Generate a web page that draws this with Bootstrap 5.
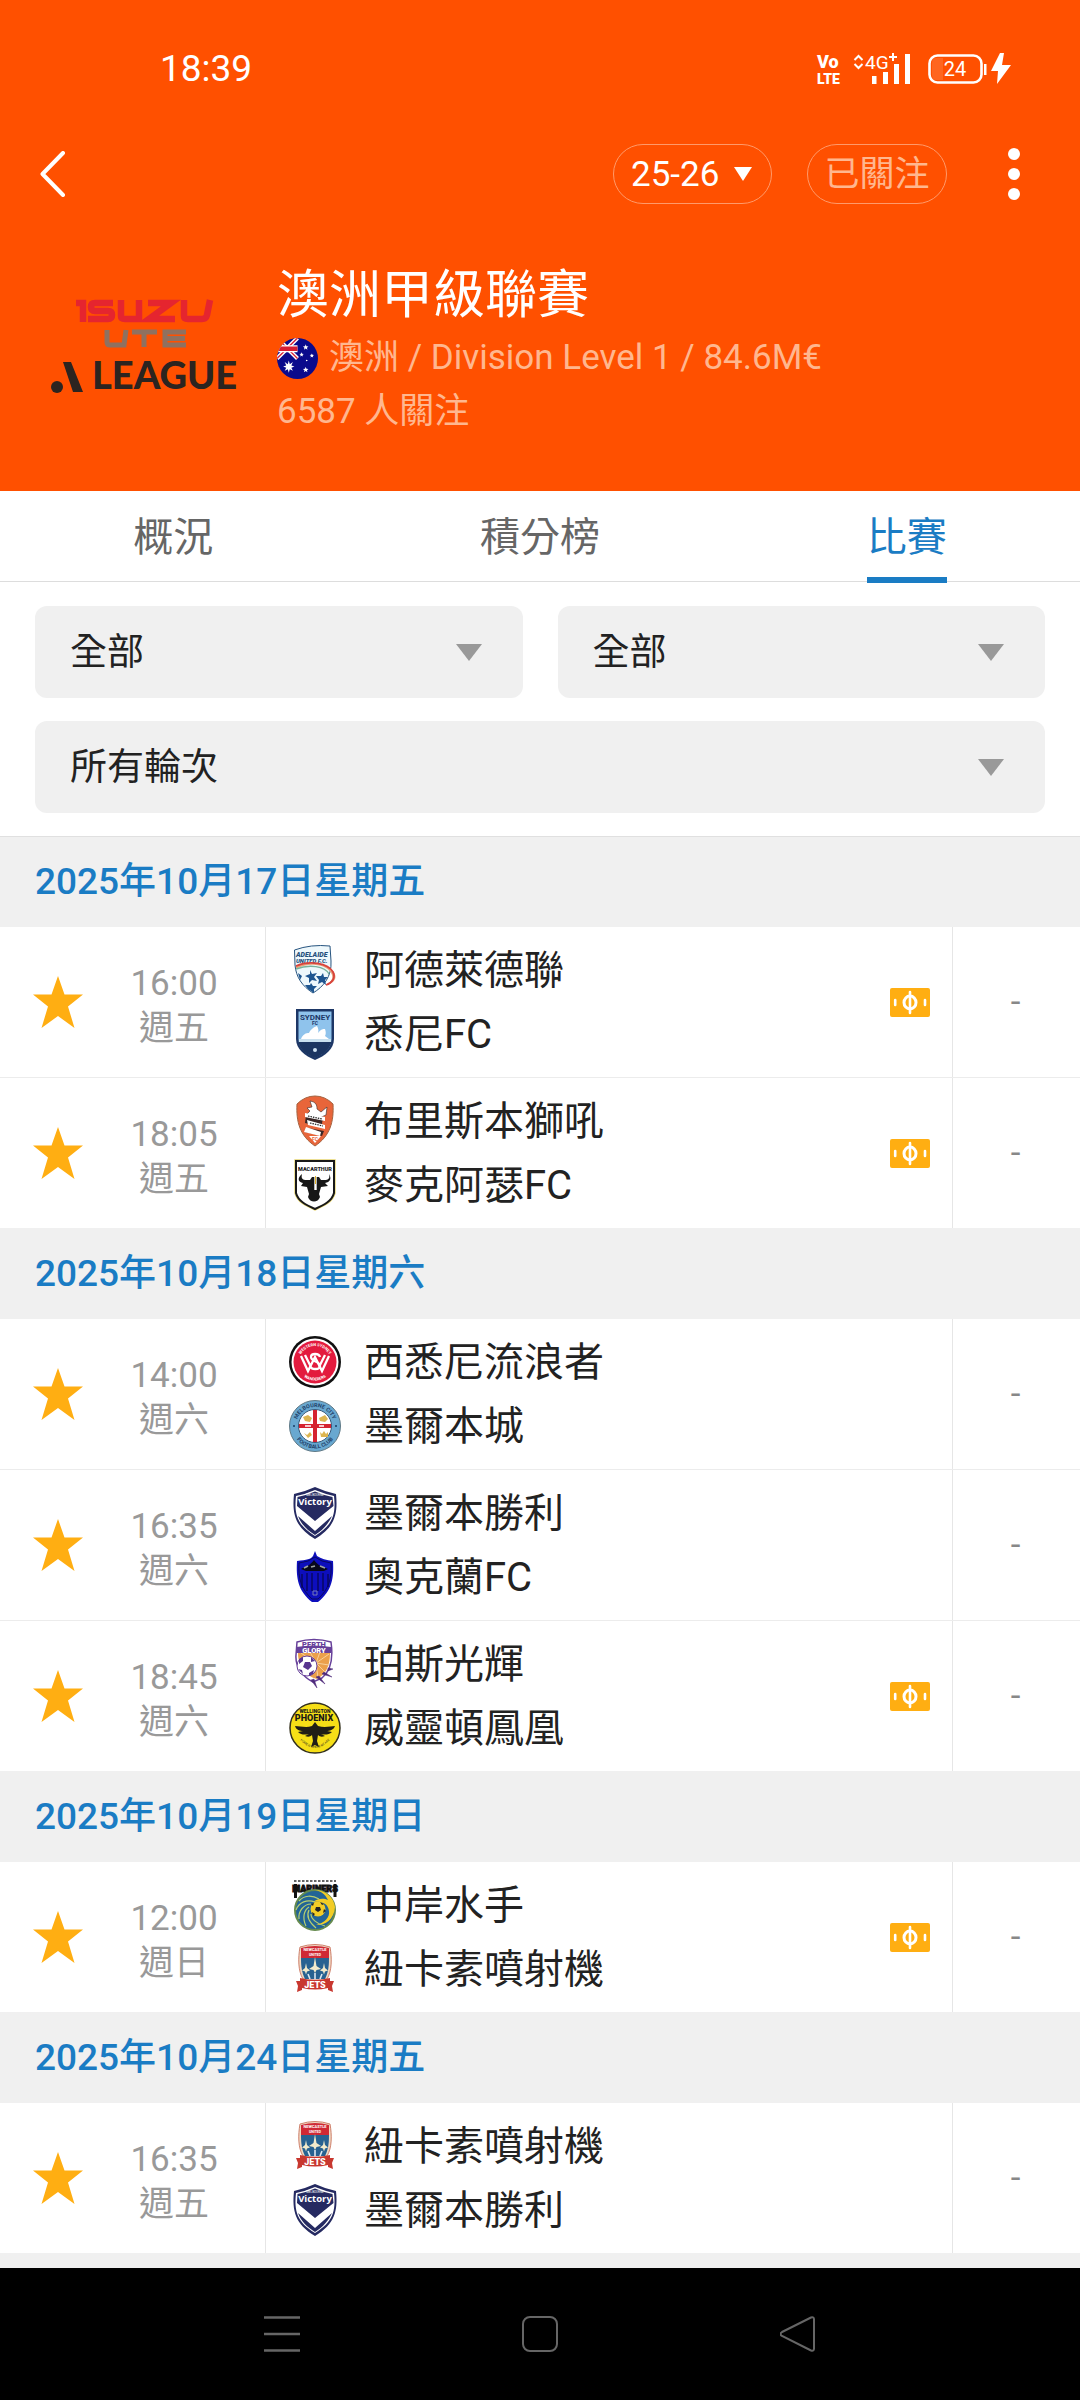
<!DOCTYPE html>
<html lang="zh-Hant">
<head>
<meta charset="utf-8">
<meta name="viewport" content="width=device-width, initial-scale=1">
<title>澳洲甲級聯賽</title>
<link href="https://cdn.jsdelivr.net/npm/bootstrap@5.3.0/dist/css/bootstrap.min.css" rel="stylesheet">
<style>
  :root { --brand: #ff5000; --accent: #1a7cc4; --panel: #f0f0f0; --rule: #e6e6e6; }
  body { font-family: Roboto, "Noto Sans CJK TC", sans-serif; font-size: 35px; line-height: 44px; color: #222; background: #fff; }
  svg { display: block; flex: none; }
  .hero { background: var(--brand); color: #fff; padding-bottom: 52px; }
  .status-bar { height: 138px; padding: 0 66px 0 160px; font-size: 37px; }
  .app-bar { height: 72px; padding: 0 51px 0 32px; }
  .pill { height: 60px; border: 1px solid #ff9a6a; border-radius: 30px; background-color: transparent; font-size: 35px; line-height: 44px; padding: 2px 0 0; }
  .season { width: 159px; color: #fff; appearance: none; padding-left: 17px;
    background: url("data:image/svg+xml,%3Csvg xmlns='http://www.w3.org/2000/svg' viewBox='0 0 18 14'%3E%3Cpath fill='%23fff' d='M0 0h18L9 14z'/%3E%3C/svg%3E") no-repeat right 19px center / 18px 14px; }
  .follow { width: 140px; color: #ffb78f; margin-left: 35px; }
  .icon-btn { border: 0; background: none; padding: 8px; }
  .more { margin-left: 52px; }
  .league { padding: 56px 36px 0 41px; gap: 36px; }
  .league-name { font-size: 52px; line-height: 60px; font-weight: 400; margin: 0 0 5px; }
  .league-info { line-height: 54px; color: #ffb78f; gap: 11px; }
  .tabs { height: 91px; border-bottom: 1px solid #ddd; font-size: 40px; }
  .tabs .nav-link { color: #666; line-height: 50px; padding: 22px 0 0; height: 92px; }
  .tabs .nav-link span { display: inline-block; height: 70px; line-height: 50px; }
  .tabs .nav-link.active { color: var(--accent); }
  .tabs .nav-link.active span { border-bottom: 6px solid var(--accent); }
  .filters { padding: 24px 35px 23px; gap: 23px 35px; display: grid; grid-template-columns: 1fr 1fr; border-bottom: 1px solid #e0e0e0; }
  .filters .form-select { height: 92px; border: 0; border-radius: 12px; color: #222; font-size: 37px; line-height: 48px; padding: 2px 80px 0 35px;
    background: var(--panel) url("data:image/svg+xml,%3Csvg xmlns='http://www.w3.org/2000/svg' viewBox='0 0 26 17'%3E%3Cpath fill='%23999' d='M0 0h26L13 17z'/%3E%3C/svg%3E") no-repeat right 41px center / 26px 17px; }
  .wide { grid-column: 1 / -1; }
  .day { background: var(--panel); color: var(--accent); font-size: 37px; line-height: 90px; font-weight: 500; margin: 0; padding: 0 35px; }
  .fixture { border-bottom: 1px solid #ececec; height: 151px; }
  .fixture-last { border-bottom-color: var(--panel); }
  .fav { width: 115px; padding: 0 0 0 33px; border: 0; background: none; flex: none; }
  .kickoff { width: 118px; flex: none; color: #999; text-align: center; line-height: 45px; padding-top: 7px; }
  .kickoff-box { width: 266px; border-right: 1px solid var(--rule); flex: none; }
  .teams { padding: 17px 0 17px 23px; gap: 12px; }
  .club { height: 52px; gap: 23px; font-size: 40px; line-height: 54px; }
  .ticket { padding-right: 22px; }
  .score { width: 128px; flex: none; border-left: 1px solid var(--rule); color: #888; padding-right: 2px; }
  .list-end { background: var(--panel); height: 14px; }
  .sys-nav { background: #000; height: 132px; padding: 0 264px; }
</style>
</head>
<body>
<svg width="0" height="0" class="position-absolute" aria-hidden="true">
  <defs>
    <symbol id="star" viewBox="0 0 50 52"><path fill="#ffae12" d="M25 0l6.500 18.500H50L35 30.500 41.500 52 25 40 8.500 52 15 30.500 0 18.500h18.500z"/></symbol>
    <symbol id="note" viewBox="0 0 40 29"><rect width="40" height="29" rx="2" fill="#ffae12"/><g fill="none" stroke="#fff" stroke-width="3"><ellipse cx="20" cy="14.500" rx="6" ry="6.500"/><path d="M20 4v21M5.200 12v5M35 12v5" stroke-linecap="round" stroke-width="2.600"/></g></symbol>

    <symbol id="adelaide" viewBox="0 0 52 52">
      <path d="M5.500 6Q22 0 41 2l1 15c1 16-8 26-18 32C13 42 7 33 6 21z" fill="#eef8fc" stroke="#27547f"/>
      <g font-family="Roboto, sans-serif" font-weight="900" font-style="italic" fill="#24507c"><text x="7" y="13" font-size="7">ADELAIDE</text><text x="7" y="19" font-size="6">UNITED F.C.</text></g>
      <path d="M7 25c14-8 33-4 36 6 1 5-2 8-7 10 13-2 13-11 5-17C31 18 15 18 7 22z" fill="#e9a27a"/>
      <path d="M7 22c13-6 32-3 37 6 3 6-1 11-7 13" fill="none" stroke="#d8433c" stroke-width="1.800"/>
      <path d="M7 25c13-5 29-3 33 5" fill="none" stroke="#78b39b" stroke-width="1.500"/>
      <path fill="#1e5590" d="M21 26l2 4 5-1-3 4 3 4-5-1-3 3v-5l-4-2 5-2zM34 29l1 4 4 0-3 3 1 5-4-3-4 2 1-4-3-4h5zM22 39l2 3h4l-3 3 0 4-6-4-3-4h5zM9 29l4 3-2 4z"/>
    </symbol>
    <symbol id="sydney" viewBox="0 0 52 52">
      <path d="M7 1h38v30c0 10-9 17-19 21C16 48 7 41 7 31z" fill="#1d3766"/>
      <path d="M9.500 3.500h33V31c0 9-8 15-16.500 18.500C17 46 9.500 40 9.500 31z" fill="#8fc3ec"/>
      <path d="M9.500 34h33c-2 8-9 13-16.500 16C18 47 11 42 9.500 34z" fill="#1b3561"/>
      <path d="M12 31c2-5 5-6 8-6 1-3 5-6 8-7 1 2 2 4 1 7 3-4 5-4 7-4 1 3 1 5 0 7l4 3z" fill="#fff"/>
      <path d="M10 31h32v3H10z" fill="#c8e0ef"/><circle cx="26" cy="42" r="2" fill="#cfe2f2"/>
      <g font-family="Roboto, sans-serif" font-weight="700" fill="#1d3766" text-anchor="middle"><text x="26" y="11.500" font-size="8">SYDNEY</text><text x="26" y="17" font-size="5">FC</text></g>
    </symbol>
    <symbol id="roar" viewBox="0 0 52 52">
      <path d="M8 9Q16 1 26 1t18 8c1 18-3 32-18 42C11 41 7 27 8 9z" fill="#e8653a" stroke="#a46340"/>
      <path d="M21 6c6 1 7 4 7 8l4 3 6-5-1 8-7 3 3 6-12-2-4-7 4-4-3-3 5-1z" fill="#fff" stroke="#392a2a" stroke-width=".6"/>
      <path d="M17 20l17 4-2 8-16-4zM19 33l16 3-2 5-17-4z" fill="#3b2726"/>
      <path d="M16 18l20 4v4l-20-4zM18 25l18 5v4l-17-4zM17 32l15 5-1 4-16-4z" fill="#fff"/>
      <path d="M19 21l14 3M21 28l13 3" stroke="#222" stroke-width="1.200" stroke-dasharray="1.500 1"/>
      <path d="M20 41h12l-6 7z" fill="#fff"/><text x="26" y="45.500" font-size="5" text-anchor="middle" font-weight="700" fill="#e8653a">FC</text>
    </symbol>
    <symbol id="macarthur" viewBox="0 0 52 52">
      <path d="M7 2h38v32c-2 8-10 12-19 16C17 46 9 42 7 34z" fill="#fff" stroke="#e6d571" stroke-width="3.400"/>
      <path d="M7 2h38v32c-2 8-10 12-19 16C17 46 9 42 7 34z" fill="#fff" stroke="#181818" stroke-width="2"/>
      <text x="26" y="11.500" font-size="5.500" font-family="Roboto, sans-serif" font-weight="900" text-anchor="middle" fill="#222">MACARTHUR</text>
      <path d="M13 15c-1 4 0 6 5 6h3l2-3h7l2 3h3c5 0 6-2 5-6 3 5 1 8-4 9l3 3-7 1-2 7 1 3c-2 6-10 6-12 0l1-3-2-7-6-1 2-3c-5-1-6-5-1-9z" fill="#171717"/>
      <path d="M26.500 17v14" stroke="#fff" stroke-width="2.400"/><path d="M26.500 17v8" stroke="#e0b52e" stroke-width="1"/>
    </symbol>
    <symbol id="wsw" viewBox="0 0 52 52">
      <circle cx="26" cy="26" r="26" fill="#111"/><circle cx="26" cy="26" r="23.500" fill="#fff"/><circle cx="26" cy="26" r="21.500" fill="#e31b3e"/>
      <path id="wswTop" d="M10 26a16 16 0 0 1 32 0" fill="none"/><path id="wswBot" d="M7.500 26a18.500 18.500 0 0 0 37 0" fill="none"/>
      <g font-size="4" font-weight="700" fill="#fff" text-anchor="middle"><text><textPath href="#wswTop" startOffset="50%">WESTERN SYDNEY</textPath></text><text><textPath href="#wswBot" startOffset="50%">WANDERERS</textPath></text></g>
      <g fill="none" stroke="#fff" stroke-width="2.300"><path d="M12 20l7 15 7-14 7 14 7-15M16 19l6 12M36 19l-6 12"/><path d="M31 21c-1-4-9-4-9 0 0 5 9 4 9 9 0 4-9 4-10 0"/></g>
    </symbol>
    <symbol id="city" viewBox="0 0 52 52">
      <circle cx="26" cy="26" r="25.500" fill="#69a8d0" stroke="#5f7986"/><circle cx="26" cy="26" r="16.500" fill="#fff" stroke="#36587a"/>
      <path d="M24 10h4v14h14v4H28v14h-4V28H10v-4h14z" fill="#d52330"/>
      <g fill="#dcb551"><path d="M14 17l5-2 4 3-2 4-5-1zM30 18l6-3 3 4-3 3-5-1zM15 33l3 2 3-3 2 3-4 3zM31 32l2 2 2-3 2 3 2-2v5h-7z"/></g>
      <path id="cityTop" d="M7 26a19 19 0 0 1 38 0" fill="none"/><path id="cityBot" d="M3.500 26a22.500 22.500 0 0 0 45 0" fill="none"/>
      <g font-size="5.500" font-family="Roboto, sans-serif" font-weight="700" fill="#1e4169" text-anchor="middle"><text><textPath href="#cityTop" startOffset="50%">MELBOURNE CITY</textPath></text><text><textPath href="#cityBot" startOffset="50%">FOOTBALL CLUB</textPath></text></g>
      <circle cx="5" cy="26" r="1" fill="#183e66"/><circle cx="47" cy="26" r="1" fill="#183e66"/>
      <path d="M16 26h6M30 26h5" stroke="#fff" stroke-width="1.500"/>
    </symbol>
    <symbol id="victory" viewBox="0 0 52 52">
      <path d="M5 7Q15 5 26 0q11 5 21 7c2 20-1 33-21 45C6 40 3 27 5 7z" fill="#252a61"/>
      <path d="M7 9Q17 7 26 3q10 4 19 6c2 18-1 29-19 40C8 38 5 27 7 9z" fill="#fff"/>
      <path d="M8.500 10Q18 8 26 4.500 34 8 43.500 10l1 9L26 34 8 19z" fill="#252a61"/>
      <path d="M9 29l17 15 17-15c-3 7-9 14-17 19C18 43 12 37 9 29z" fill="#252a61"/>
      <text x="26" y="17.500" font-size="9.500" font-family="'Open Sans', sans-serif" font-weight="700" text-anchor="middle" fill="#fff">Victory</text>
      <text x="26" y="8.500" font-size="3" text-anchor="middle" fill="#fff">MELBOURNE</text>
    </symbol>
    <symbol id="auckland" viewBox="0 0 52 52">
      <path d="M26 0l2 5q6 4 16 5c1 17-1 30-15 41h-6C9 40 7 27 8 10 18 9 22 8 24 5z" fill="#0d0ebd"/>
      <path d="M10 12q10-1 16-6 6 5 16 6c1 15-2 26-13 36h-6C12 38 9 27 10 12z" fill="none" stroke="#080863"/>
      <path d="M12 18c3-2 8-2 13-9 5 7 10 7 14 9l-4 2H17z" fill="#08081c"/>
      <path d="M15 17l4-2M22 16l4-1M31 15l5 2" stroke="#9da3a0" stroke-width="1.700"/>
      <path d="M13 23v14M18 22v18M23 22v18M29 22v18M34 22v18M39 23v13" stroke="#070757" stroke-width="1.300"/>
      <path d="M24 40h4v4h-4z" fill="none" stroke="#777bb5"/>
    </symbol>
    <symbol id="perth" viewBox="0 0 52 52">
      <path d="M8 4Q25-1 42 4c2 14 1 28-9 36l-9 4C14 39 6 29 7 17z" fill="#fff" stroke="#67409a" stroke-width="1.500"/>
      <path d="M9 15h32c0 13-4 21-13 26C19 39 9 30 9 15z" fill="#eba04b"/>
      <path d="M27 25L12 15M27 25L21 14M27 25l4-11M27 25l13-9M27 25l13 2M27 25l9 9M27 25l2 15" stroke="#f8d09a"/>
      <path d="M7 9q18-3 35 0v6H7z" fill="#67409a"/>
      <g font-family="Roboto, sans-serif" font-size="7.500" font-weight="900" text-anchor="middle"><text x="25" y="8.500" fill="#67409a">PERTH</text><text x="25" y="15" fill="#fff">GLORY</text></g>
      <circle cx="18" cy="28" r="10" fill="#fff" stroke="#67409a"/>
      <path fill="#58358f" d="M16 24h5l2 4-4 4-5-3zM10 21l4-2v4l-4 3zM22 19l4 4-4 1zM9 31l4 1 1 4zM20 35l5-3-1 4-4 2z"/>
      <path d="M39 30l5 1-5 2zM35 34l8 5-10-3zM30 38l6 8-9-7zM25 41l3 9-6-8z" fill="#4e2b7b" stroke="#4e2b7b" stroke-width=".5"/>
    </symbol>
    <symbol id="phoenix" viewBox="0 0 52 52">
      <circle cx="26" cy="26" r="25" fill="#f6df17" stroke="#33301c" stroke-width="1.500"/>
      <g font-family="Roboto, sans-serif" font-weight="900" text-anchor="middle" fill="#1c1b16"><text x="26" y="10.500" font-size="5">WELLINGTON</text><text x="25" y="19" font-size="9">PHOENIX</text></g>
      <path d="M26 20l3 4c7 2 13 0 17 0-1 4-6 5-8 5l5 1c-3 3-8 3-11 2l4 2c-3 1-5 1-7-1l-1 6 2 6-4-2-4 2 2-6-1-6c-2 2-4 2-7 1l4-2c-4 1-8 1-11-2l5-1c-3 0-7-1-8-5 5 0 11 2 17 0z" fill="#211f16"/>
      <path id="phxBot" d="M8 34Q26 58 44 34" fill="none"/><text font-size="3" fill="#222" text-anchor="middle"><textPath href="#phxBot" startOffset="50%">HOME IS WHERE WE ARE</textPath></text>
    </symbol>
    <symbol id="mariners" viewBox="0 0 52 52">
      <text x="26" y="13" font-family="Roboto, sans-serif" font-weight="900" font-size="9" text-anchor="middle" fill="#111" stroke="#111" stroke-width=".9">MARINERS</text>
      <path d="M5 2h42" stroke="#333" stroke-width="1.500" stroke-dasharray="2.500 1.500"/><path d="M6.500 5v14M46 5v13" stroke="#111" stroke-width="3"/>
      <circle cx="26" cy="31" r="20" fill="#226496" stroke="#658a4e" stroke-width="2"/>
      <path d="M26 11c11 0 19 8 20 17-1 14-12 19-19 18 9-2 14-8 13-14-1-8-8-10-16-9 5-4 11-4 15-2-3-6-7-9-13-10z" fill="#f2cc26"/>
      <g fill="none" stroke="#b7cf70" stroke-width="1.200"><path d="M10 22c5-6 13-6 20-2M7 31c3-8 11-11 19-8M10 40c-1-8 5-15 12-15M17 47c-4-8-2-16 3-19M27 49c-7-6-10-12-7-18M36 47c-8-2-14-7-14-12"/></g>
      <circle cx="29" cy="30" r="7.500" fill="#f2cc26"/><path d="M27 28h4l1 3-3 2-3-2zM22 25l3-1-1 3zM31 23l4 2-2 1zM35 30l2 2-3 2zM23 33l3 2-2 2z" fill="#222"/>
    </symbol>
    <symbol id="jets" viewBox="0 0 52 52">
      <path d="M11 4q15-5 30 0c2 11 2 24-3 32H14C9 28 9 15 11 4z" fill="#efd9c3" stroke="#cf806b"/>
      <path d="M12 5q14-4 28 0v10H12z" fill="#cf2934"/><path d="M12 15h28c0 9-1 15-4 21H16c-3-6-4-12-4-21z" fill="#276291"/>
      <g font-size="4" font-weight="700" text-anchor="middle" fill="#fff"><text x="26" y="8">NEWCASTLE</text><text x="26" y="12.500" font-size="3.500">UNITED</text></g>
      <g fill="#f2ebcb"><path d="M26 14l1.500 9 4.500 3-4.500 1-1.500 3-1.500-3-4.500-1 4.500-3zM17 20l1 5 3 2.500-3 1-1 3-1-3-3-1 3-2.500zM35 20l1 5 3 2.500-3 1-1 3-1-3-3-1 3-2.500z"/></g><path d="M19 31l2 5M26 30v6M33 31l-2 5" stroke="#dce8f0" stroke-width="1.600"/>
      <path d="M11 35q15 4 30 0v3h4l-2 5 1 6-5-2v-2q-13 3-26 0v2l-5 2 1-6-2-5h4z" fill="#c8372f"/>
      <text x="26" y="44.500" font-family="Roboto, sans-serif" font-size="9" font-weight="900" text-anchor="middle" fill="#fff">JETS</text>
    </symbol>
    <clipPath id="flagClip"><circle cx="20" cy="20" r="20"/></clipPath>
  </defs>
</svg>

<header class="hero">
  <div class="status-bar d-flex align-items-center justify-content-between">
    <span>18:39</span>
    <svg width="200" height="34" viewBox="814 52 200 34" role="img" aria-label="VoLTE 4G+ 24%">
      <g fill="#fff" font-family="Roboto, sans-serif">
        <text x="817" y="68" font-size="18" font-weight="900">Vo</text><text x="817" y="84" font-size="14" font-weight="900">LTE</text>
        <text x="865" y="69" font-size="19">4G</text>
        <path d="M872 76h4.500v8H872zM883 72h5v12h-5zM894 64h5v20h-5zM905 54h5v30h-5z"/>
        <path d="M1000 53l-9 18h7l-1 13 14-19h-9l2-12z"/><path d="M984 64h2.500v11H984z"/>
        <text x="955" y="76" font-size="20" text-anchor="middle">24</text>
      </g>
      <path d="M936 58h7v22h-7q-4 0-4-5V63q0-5 4-5z" fill="#ff7a3d" opacity=".5"/><g fill="none" stroke="#fff"><path d="M854.500 60l4-4 4 4M854.500 64l4 4 4-4M893 53v8M889 57h8" stroke-width="2"/><rect x="929.500" y="55.500" width="52" height="27" rx="8" stroke-width="2.600"/></g>
    </svg>
  </div>
  <div class="app-bar d-flex align-items-center">
    <button class="icon-btn me-auto" type="button" aria-label="返回"><svg width="26" height="46" viewBox="0 0 26 46"><path d="M23 2L2.500 23 23 44" fill="none" stroke="#fff" stroke-width="4" stroke-linecap="round" stroke-linejoin="round"/></svg></button>
    <select class="pill season" aria-label="賽季"><option>25-26</option></select>
    <button class="pill follow" type="button">已關注</button>
    <button class="icon-btn more" type="button" aria-label="更多"><svg width="14" height="54" viewBox="0 0 14 54" fill="#fff"><circle cx="7" cy="7" r="6"/><circle cx="7" cy="27" r="6"/><circle cx="7" cy="47" r="6"/></svg></button>
  </div>
  <div class="league d-flex">
    <svg width="200" height="160" viewBox="41 265 200 160" role="img" aria-label="Isuzu UTE A-League">
      <g fill="none" stroke="#e5252f" stroke-width="6.500"><path d="M76 302h7v19M113 302H95q-4 0-4 4t4 4h13q4 0 4 4t-4 4H88M121 299v16q0 3 4 3h14V299M148 302h23l-22 16h26M184 299v16q0 3 4 3h14q4 0 5-4l3-15"/></g>
      <g fill="none" stroke="#8f7160" stroke-width="5"><path d="M107 329v12q0 3 3 3h14l2-15M132 331h25M144 331v15M186 331h-21v13h21M165 337.500h20"/></g>
      <circle cx="57" cy="386" r="6" fill="#2c2420"/><path d="M63 361h8l12 30H73z" fill="#2c2420"/>
      <text x="92" y="388" font-family="Lato, sans-serif" font-size="38" font-weight="900" fill="#2c2420">LEAGUE</text>
    </svg>
    <div>
      <h1 class="league-name">澳洲甲級聯賽</h1>
      <div class="league-info d-flex align-items-center">
        <svg width="41" height="41" viewBox="0 0 40 40" role="img" aria-label="澳洲國旗"><g clip-path="url(#flagClip)"><path fill="#0a0a8c" d="M0 0h40v40H0z"/><path d="M0 0l20 20M20 0L0 20" stroke="#fff" stroke-width="4"/><path d="M0 0l20 20M20 0L0 20" stroke="#d81d32" stroke-width="1.300"/><path d="M0 10.500h20" stroke="#fff" stroke-width="7"/><path d="M0 10.500h20" stroke="#d81d32" stroke-width="4.500"/><path fill="#fff" d="M11.500 22l1 3.500 3-2-1.500 3.300 3 1-3 1.200 1.500 3-3-1.500-1 3.500-1-3.500-3 1.500 1.500-3-3-1.200 3-1-1.500-3.300 3 2zM28 6l.7 2 2 .2-1.500 1.200.5 2-1.700-1.200-1.700 1.200.5-2-1.500-1.200 2-.2zM24 14l.6 1.400 1.500.1-1.200 1 .4 1.500-1.300-.8-1.300.8.4-1.500-1.200-1 1.500-.1zM34 15l.6 1.400 1.500.1-1.200 1 .4 1.500-1.300-.8-1.300.8.4-1.500-1.200-1 1.500-.1zM28 28l.7 2 2 .2-1.500 1.200.5 2-1.700-1.200-1.700 1.200.5-2-1.500-1.200 2-.2z"/><circle cx="29" cy="22" r=".8" fill="#fff"/></g></svg>
        <span>澳洲 / Division Level 1 / 84.6M€</span>
      </div>
      <div class="league-info">6587 人關注</div>
    </div>
  </div>
</header>

<nav class="tabs nav nav-fill flex-nowrap">
  <a class="nav-item nav-link" href="#"><span>概況</span></a>
  <a class="nav-item nav-link" href="#"><span>積分榜</span></a>
  <a class="nav-item nav-link active" href="#" aria-current="page"><span>比賽</span></a>
</nav>

<main>
  <form class="filters">
    <select class="form-select" aria-label="階段"><option>全部</option></select>
    <select class="form-select" aria-label="球隊"><option>全部</option></select>
    <select class="form-select wide" aria-label="輪次"><option>所有輪次</option></select>
  </form>

  <section>
    <h2 class="day">2025年10月17日星期五</h2>
    <article class="fixture d-flex">
      <div class="kickoff-box d-flex align-items-center"><button class="fav" type="button" aria-label="收藏"><svg width="50" height="52"><use href="#star"/></svg></button><div class="kickoff"><div>16:00</div><div>週五</div></div></div>
      <div class="teams d-flex flex-column flex-grow-1"><div class="club d-flex"><svg width="52" height="52"><use href="#adelaide"/></svg><span>阿德萊德聯</span></div><div class="club d-flex"><svg width="52" height="52"><use href="#sydney"/></svg><span>悉尼FC</span></div></div>
      <div class="ticket d-flex align-items-center"><svg width="40" height="29"><use href="#note"/></svg></div>
      <div class="score d-flex align-items-center justify-content-center">-</div>
    </article>
    <article class="fixture fixture-last d-flex">
      <div class="kickoff-box d-flex align-items-center"><button class="fav" type="button" aria-label="收藏"><svg width="50" height="52"><use href="#star"/></svg></button><div class="kickoff"><div>18:05</div><div>週五</div></div></div>
      <div class="teams d-flex flex-column flex-grow-1"><div class="club d-flex"><svg width="52" height="52"><use href="#roar"/></svg><span>布里斯本獅吼</span></div><div class="club d-flex"><svg width="52" height="52"><use href="#macarthur"/></svg><span>麥克阿瑟FC</span></div></div>
      <div class="ticket d-flex align-items-center"><svg width="40" height="29"><use href="#note"/></svg></div>
      <div class="score d-flex align-items-center justify-content-center">-</div>
    </article>
  </section>

  <section>
    <h2 class="day">2025年10月18日星期六</h2>
    <article class="fixture d-flex">
      <div class="kickoff-box d-flex align-items-center"><button class="fav" type="button" aria-label="收藏"><svg width="50" height="52"><use href="#star"/></svg></button><div class="kickoff"><div>14:00</div><div>週六</div></div></div>
      <div class="teams d-flex flex-column flex-grow-1"><div class="club d-flex"><svg width="52" height="52"><use href="#wsw"/></svg><span>西悉尼流浪者</span></div><div class="club d-flex"><svg width="52" height="52"><use href="#city"/></svg><span>墨爾本城</span></div></div>
      <div class="score d-flex align-items-center justify-content-center">-</div>
    </article>
    <article class="fixture d-flex">
      <div class="kickoff-box d-flex align-items-center"><button class="fav" type="button" aria-label="收藏"><svg width="50" height="52"><use href="#star"/></svg></button><div class="kickoff"><div>16:35</div><div>週六</div></div></div>
      <div class="teams d-flex flex-column flex-grow-1"><div class="club d-flex"><svg width="52" height="52"><use href="#victory"/></svg><span>墨爾本勝利</span></div><div class="club d-flex"><svg width="52" height="52"><use href="#auckland"/></svg><span>奧克蘭FC</span></div></div>
      <div class="score d-flex align-items-center justify-content-center">-</div>
    </article>
    <article class="fixture fixture-last d-flex">
      <div class="kickoff-box d-flex align-items-center"><button class="fav" type="button" aria-label="收藏"><svg width="50" height="52"><use href="#star"/></svg></button><div class="kickoff"><div>18:45</div><div>週六</div></div></div>
      <div class="teams d-flex flex-column flex-grow-1"><div class="club d-flex"><svg width="52" height="52"><use href="#perth"/></svg><span>珀斯光輝</span></div><div class="club d-flex"><svg width="52" height="52"><use href="#phoenix"/></svg><span>威靈頓鳳凰</span></div></div>
      <div class="ticket d-flex align-items-center"><svg width="40" height="29"><use href="#note"/></svg></div>
      <div class="score d-flex align-items-center justify-content-center">-</div>
    </article>
  </section>

  <section>
    <h2 class="day">2025年10月19日星期日</h2>
    <article class="fixture fixture-last d-flex">
      <div class="kickoff-box d-flex align-items-center"><button class="fav" type="button" aria-label="收藏"><svg width="50" height="52"><use href="#star"/></svg></button><div class="kickoff"><div>12:00</div><div>週日</div></div></div>
      <div class="teams d-flex flex-column flex-grow-1"><div class="club d-flex"><svg width="52" height="52"><use href="#mariners"/></svg><span>中岸水手</span></div><div class="club d-flex"><svg width="52" height="52"><use href="#jets"/></svg><span>紐卡素噴射機</span></div></div>
      <div class="ticket d-flex align-items-center"><svg width="40" height="29"><use href="#note"/></svg></div>
      <div class="score d-flex align-items-center justify-content-center">-</div>
    </article>
  </section>

  <section>
    <h2 class="day">2025年10月24日星期五</h2>
    <article class="fixture fixture-last d-flex">
      <div class="kickoff-box d-flex align-items-center"><button class="fav" type="button" aria-label="收藏"><svg width="50" height="52"><use href="#star"/></svg></button><div class="kickoff"><div>16:35</div><div>週五</div></div></div>
      <div class="teams d-flex flex-column flex-grow-1"><div class="club d-flex"><svg width="52" height="52"><use href="#jets"/></svg><span>紐卡素噴射機</span></div><div class="club d-flex"><svg width="52" height="52"><use href="#victory"/></svg><span>墨爾本勝利</span></div></div>
      <div class="score d-flex align-items-center justify-content-center">-</div>
    </article>
  </section>
  <div class="list-end"></div>
</main>

<footer class="sys-nav d-flex align-items-center justify-content-between">
  <svg width="36" height="38" viewBox="0 0 36 38"><path d="M0 2.500h36M0 19h36M0 35.500h36" stroke="#666" stroke-width="2.600"/></svg>
  <svg width="36" height="38" viewBox="0 0 36 38"><rect x="1" y="2" width="34" height="34" rx="7" fill="none" stroke="#666" stroke-width="2"/></svg>
  <svg width="36" height="38" viewBox="0 0 36 38"><path d="M2 17L31 2.500q3-1 3 2v29q0 3-3 2L2 21q-3-2 0-4z" fill="none" stroke="#666" stroke-width="2"/></svg>
</footer>
<script src="https://cdn.jsdelivr.net/npm/bootstrap@5.3.0/dist/js/bootstrap.bundle.min.js"></script>
</body>
</html>
